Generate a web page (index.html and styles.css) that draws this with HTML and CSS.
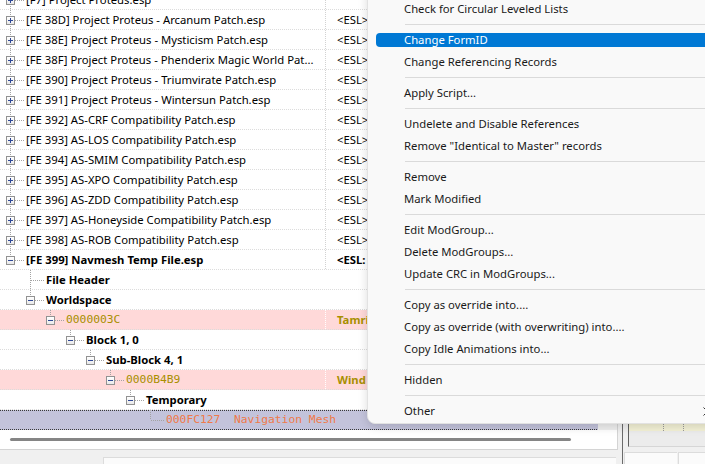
FILE: index.html
```html
<!DOCTYPE html>
<html lang="en">
<head>
    <meta charset="UTF-8">
    <meta name="viewport" content="width=device-width, initial-scale=1.0">
    <title>xEdit</title>
    <link rel="stylesheet" href="styles.css">
</head>
<body>
    <div class="app">
        <div class="left">
            <div class="treewrap">
                <div class="treebody">
                    <div class="rows">
                        <div class="list">
                            <div class="row cols"><div class="c1"><span class="exp"><i class="box plus"></i></span><span class="lbl">[F7] Project Proteus.esp</span></div><div class="c2"></div></div>
                            <div class="row cols"><div class="c1"><span class="exp"><i class="box plus"></i></span><span class="lbl">[FE 38D] Project Proteus - Arcanum Patch.esp</span></div><div class="c2">&lt;ESL&gt;</div></div>
                            <div class="row cols"><div class="c1"><span class="exp"><i class="box plus"></i></span><span class="lbl">[FE 38E] Project Proteus - Mysticism Patch.esp</span></div><div class="c2">&lt;ESL&gt;</div></div>
                            <div class="row cols"><div class="c1"><span class="exp"><i class="box plus"></i></span><span class="lbl">[FE 38F] Project Proteus - Phenderix Magic World Pat...</span></div><div class="c2">&lt;ESL&gt;</div></div>
                            <div class="row cols"><div class="c1"><span class="exp"><i class="box plus"></i></span><span class="lbl">[FE 390] Project Proteus - Triumvirate Patch.esp</span></div><div class="c2">&lt;ESL&gt;</div></div>
                            <div class="row cols"><div class="c1"><span class="exp"><i class="box plus"></i></span><span class="lbl">[FE 391] Project Proteus - Wintersun Patch.esp</span></div><div class="c2">&lt;ESL&gt;</div></div>
                            <div class="row cols"><div class="c1"><span class="exp"><i class="box plus"></i></span><span class="lbl">[FE 392] AS-CRF Compatibility Patch.esp</span></div><div class="c2">&lt;ESL&gt;</div></div>
                            <div class="row cols"><div class="c1"><span class="exp"><i class="box plus"></i></span><span class="lbl">[FE 393] AS-LOS Compatibility Patch.esp</span></div><div class="c2">&lt;ESL&gt;</div></div>
                            <div class="row cols"><div class="c1"><span class="exp"><i class="box plus"></i></span><span class="lbl">[FE 394] AS-SMIM Compatibility Patch.esp</span></div><div class="c2">&lt;ESL&gt;</div></div>
                            <div class="row cols"><div class="c1"><span class="exp"><i class="box plus"></i></span><span class="lbl">[FE 395] AS-XPO Compatibility Patch.esp</span></div><div class="c2">&lt;ESL&gt;</div></div>
                            <div class="row cols"><div class="c1"><span class="exp"><i class="box plus"></i></span><span class="lbl">[FE 396] AS-ZDD Compatibility Patch.esp</span></div><div class="c2">&lt;ESL&gt;</div></div>
                            <div class="row cols"><div class="c1"><span class="exp"><i class="box plus"></i></span><span class="lbl">[FE 397] AS-Honeyside Compatibility Patch.esp</span></div><div class="c2">&lt;ESL&gt;</div></div>
                            <div class="row cols"><div class="c1"><span class="exp"><i class="box plus"></i></span><span class="lbl">[FE 398] AS-ROB Compatibility Patch.esp</span></div><div class="c2">&lt;ESL&gt;</div></div>
                            <div class="row cols"><div class="c1"><span class="exp end"><i class="box"></i></span><span class="lbl b">[FE 399] Navmesh Temp File.esp</span></div><div class="c2 b">&lt;ESL:</div></div>
                            <div class="row"><div class="c1 l1"><span class="exp leaf"></span><span class="lbl b">File Header</span></div><div class="c2"></div></div>
                            <div class="row"><div class="c1 l1"><span class="exp end"><i class="box"></i></span><span class="lbl b">Worldspace</span></div><div class="c2"></div></div>
                            <div class="row cols pink"><div class="c1 l2"><span class="exp end"><i class="box"></i></span><span class="lbl mono olive">0000003C</span></div><div class="c2 b olive">Tamri</div></div>
                            <div class="row"><div class="c1 l3"><span class="exp end"><i class="box"></i></span><span class="lbl b">Block 1, 0</span></div><div class="c2"></div></div>
                            <div class="row"><div class="c1 l4"><span class="exp end"><i class="box"></i></span><span class="lbl b">Sub-Block 4, 1</span></div><div class="c2"></div></div>
                            <div class="row cols pink"><div class="c1 l5"><span class="exp end"><i class="box"></i></span><span class="lbl mono olive">0000B4B9</span></div><div class="c2 b olive">Wind</div></div>
                            <div class="row"><div class="c1 l6"><span class="exp end"><i class="box"></i></span><span class="lbl b">Temporary</span></div><div class="c2"></div></div>
                            <div class="row sel"><div class="c1 l7"><span class="exp leaf end"></span><span class="lbl mono coral">000FC127  Navigation Mesh</span></div></div>
                        </div>
                    </div>
                    <div class="vscroll"></div>
                </div>
                <div class="hscroll"><div class="thumb"></div></div>
            </div>
            <div class="lstatus"><div class="panel"></div></div>
        </div>
        <div class="right">
            <div class="rgrid">
                <div class="yrow"><span class="cell"></span><span class="cell"></span><span class="cell"></span></div>
            </div>
            <div class="rstatus"><div class="panel p1"></div><div class="panel p2"></div></div>
        </div>
    </div>

    <div class="menu">
        <div class="item"><span>Check for Circular Leveled Lists</span></div>
        <div class="sep"></div>
        <div class="item hot"><span>Change FormID</span></div>
        <div class="item"><span>Change Referencing Records</span></div>
        <div class="sep"></div>
        <div class="item"><span>Apply Script...</span></div>
        <div class="sep"></div>
        <div class="item"><span>Undelete and Disable References</span></div>
        <div class="item"><span>Remove "Identical to Master" records</span></div>
        <div class="sep"></div>
        <div class="item"><span>Remove</span></div>
        <div class="item"><span>Mark Modified</span></div>
        <div class="sep"></div>
        <div class="item"><span>Edit ModGroup...</span></div>
        <div class="item"><span>Delete ModGroups...</span></div>
        <div class="item"><span>Update CRC in ModGroups...</span></div>
        <div class="sep"></div>
        <div class="item"><span>Copy as override into....</span></div>
        <div class="item"><span>Copy as override (with overwriting) into....</span></div>
        <div class="item"><span>Copy Idle Animations into...</span></div>
        <div class="sep"></div>
        <div class="item"><span>Hidden</span></div>
        <div class="sep"></div>
        <div class="item sub"><span>Other <svg width="5" height="9" viewBox="0 0 5 9"><path d="M.5.5l4 4-4 4" fill="none" stroke="#333"/></svg></span></div>
    </div>
</body>
</html>
```
FILE: styles.css
```css
:root {
    --dot-h: repeating-linear-gradient(to right, #a3a3a3 0 1px, transparent 1px 2px);
    --dot-v: repeating-linear-gradient(#a3a3a3 0 1px, transparent 1px 2px);
    --sep-h: repeating-linear-gradient(to right, #dcdcdc 0 1px, transparent 1px 2px);
    --sel-h: repeating-linear-gradient(to right, #3a3a3a 0 1px, transparent 1px 2px);
    --col-v: repeating-linear-gradient(#d2d2d2 0 1px, transparent 1px 2px);
    --col-w: repeating-linear-gradient(#ffffff 0 1px, transparent 1px 2px);
}
body {
    margin: 0;
    width: 705px;
    height: 464px;
    overflow: hidden;
    background-color: #f0f0f0;
    font-family: "Noto Sans", sans-serif;
    font-size: 11.3px;
    color: #000;
}
.app {
    display: flex;
    height: 464px;
}

/* left side: tree + status */
.left {
    width: 622px;
    flex: none;
    display: flex;
    flex-direction: column;
}
.treewrap {
    width: 618px;
    height: 450px;
    box-sizing: border-box;
    border-right: 1px solid #d4d4d4;
    border-bottom: 1px solid #d4d4d4;
    display: flex;
    flex-direction: column;
}
.treebody {
    height: 430px;
    display: flex;
}
.rows {
    flex: 1;
    overflow: hidden;
    background-color: #fff;
}
.list {
    margin-top: -10px;
}
.vscroll {
    width: 19px;
    background-color: #efefef;
}
.hscroll {
    height: 19px;
    background-color: #fff;
    padding: 8px 0 0 10px;
    box-sizing: border-box;
}
.thumb {
    width: 561px;
    height: 3px;
    border-radius: 2px;
    background-color: #858585;
}
.lstatus {
    flex: 1;
    padding: 7px 6px 0 103px;
}
.panel {
    height: 100%;
    background-color: #fbfbfb;
    border-top: 1px solid #dcdcdc;
    border-left: 1px solid #dcdcdc;
    box-sizing: border-box;
}

/* tree rows */
.row {
    display: flex;
    height: 20px;
    line-height: 20px;
    background: var(--sep-h) left bottom / 100% 1px no-repeat;
}
.row.pink {
    background-color: #ffd9d9;
}
.row.sel {
    background:
        var(--sel-h) left top / 100% 1px no-repeat,
        var(--sel-h) left bottom / 100% 1px no-repeat,
        #c3c3db;
}
.c1 {
    width: 325px;
    flex: none;
    display: flex;
    box-sizing: border-box;
    overflow: hidden;
}
.sel .c1 {
    width: auto;
    overflow: visible;
}
.l1 { padding-left: 20px; }
.l2 { padding-left: 40px; }
.l3 { padding-left: 60px; }
.l4 { padding-left: 80px; }
.l5 { padding-left: 100px; }
.l6 { padding-left: 120px; }
.l7 { padding-left: 140px; }
.c2 {
    flex: 1;
    padding-left: 12px;
    white-space: nowrap;
    overflow: hidden;
}
.cols .c2 {
    background: var(--col-v) left top / 1px 100% no-repeat;
}
.pink .c2 {
    background-image: var(--col-w);
}
.lbl {
    margin-left: 2px;
    white-space: pre;
}
.b { font-weight: 700; }
.mono {
    font-family: "DejaVu Sans Mono", monospace;
    font-size: 11.3px;
}
.olive { color: #a88f00; }
.coral { color: #f07a4a; }

/* expander and connector lines */
.exp {
    flex: none;
    width: 24px;
    height: 20px;
    box-sizing: border-box;
    padding: 6px 0 0 6px;
    background-image: var(--dot-h), var(--dot-v);
    background-repeat: no-repeat;
    background-position: 15px 10px, 10px 0;
    background-size: 9px 1px, 1px 20px;
}
.exp.end {
    background-size: 9px 1px, 1px 6px;
}
.exp.leaf {
    background-position: 11px 10px, 10px 0;
    background-size: 13px 1px, 1px 20px;
}
.exp.leaf.end {
    background-size: 13px 1px, 1px 10px;
}
.box {
    display: block;
    width: 9px;
    height: 9px;
    box-sizing: border-box;
    border: 1px solid #929292;
    background:
        linear-gradient(#2d4796, #2d4796) center / 5px 1px no-repeat,
        linear-gradient(#ffffff, #e9e9e9);
}
.box.plus {
    background:
        linear-gradient(#2d4796, #2d4796) center / 5px 1px no-repeat,
        linear-gradient(#2d4796, #2d4796) center / 1px 5px no-repeat,
        linear-gradient(#ffffff, #e9e9e9);
}

/* right side */
.right {
    flex: 1;
    border-left: 1px solid #6b6b6b;
    display: flex;
    flex-direction: column;
    justify-content: flex-end;
}
.rgrid {
    height: 27px;
    margin-left: 5px;
    border-left: 1px solid #606060;
    border-bottom: 1px solid #d6d6d6;
    background-color: #ececec;
    box-sizing: border-box;
}
.yrow {
    height: 11px;
    display: flex;
    background:
        repeating-linear-gradient(to right, #d0d0c0 0 1px, transparent 1px 2px) left 3px / 100% 1px no-repeat,
        #f4f2d6;
}
.cell {
    width: 35px;
    flex: none;
    border-right: 1px dotted #9a9a9a;
}
.cell:first-child { width: 34px; }
.cell:nth-child(2) { width: 19px; }
.rstatus {
    height: 12px;
    padding-top: 5px;
    display: flex;
    gap: 1px;
}
.p1 { width: 53px; margin-left: 1px; }
.p2 { flex: 1; }

/* context menu */
.menu {
    position: absolute;
    left: 367px;
    bottom: 40px;
    width: 350px;
    padding: 20px 0 1px;
    background-color: #f9f9f9;
    border: 1px solid #e2e2e2;
    border-radius: 8px;
    box-shadow: 0 3px 10px rgba(0, 0, 0, .14);
    color: #1a1a1a;
}
.item {
    padding: 4px 8px;
}
.item span {
    display: flex;
    align-items: center;
    justify-content: space-between;
    height: 14px;
    line-height: 14px;
    padding: 0 2px 0 28px;
    border-radius: 4px;
    white-space: pre;
}
.item.hot span {
    background-color: #0078d4;
    color: #fff;
}
.sep {
    height: 1px;
    margin: 4px 0 4px 37px;
    background-color: #dadada;
}
```
